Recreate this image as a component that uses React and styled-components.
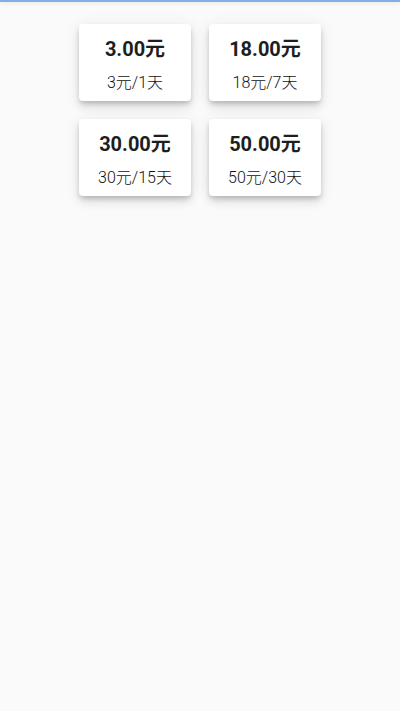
import React from 'react'
import styled, { createGlobalStyle } from 'styled-components'

const GlobalStyle = createGlobalStyle`
  html, body {
    margin: 0;
    padding: 0;
    background: #fafafa;
    font-family: Roboto, "Noto Sans CJK SC", sans-serif;
  }
`

const Page = styled.div`
  min-height: 711px;
  background: #fafafa;
`

const TopLine = styled.div`
  height: 2px;
  background: #7fb2e2;
  box-shadow: 0 1px 4px rgba(0, 0, 0, 0.12);
`

const Grid = styled.div`
  display: grid;
  grid-template-columns: repeat(2, 112px);
  gap: 18px;
  justify-content: center;
  padding-top: 22px;
`

const Card = styled.div`
  height: 77px;
  box-sizing: border-box;
  padding-top: 4px;
  background: #fff;
  border-radius: 4px;
  box-shadow: 0 3px 5px -1px rgba(0, 0, 0, 0.2), 0 6px 10px 0 rgba(0, 0, 0, 0.1),
    0 1px 18px 0 rgba(0, 0, 0, 0.06);
  display: flex;
  flex-direction: column;
  align-items: center;
  justify-content: center;
  gap: 12px;
`

const Price = styled.div`
  font-size: 20px;
  font-weight: 700;
  color: #1e1e1e;
  line-height: 24px;
`

const Desc = styled.div`
  font-size: 16px;
  font-weight: 300;
  color: #111;
  line-height: 20px;
`

const plans = [
  { price: '3.00元', desc: '3元/1天' },
  { price: '18.00元', desc: '18元/7天' },
  { price: '30.00元', desc: '30元/15天' },
  { price: '50.00元', desc: '50元/30天' },
]

export default function App() {
  return (
    <>
      <GlobalStyle />
      <Page>
        <TopLine />
        <Grid>
          {plans.map((p) => (
            <Card key={p.price}>
              <Price>{p.price}</Price>
              <Desc>{p.desc}</Desc>
            </Card>
          ))}
        </Grid>
      </Page>
    </>
  )
}
